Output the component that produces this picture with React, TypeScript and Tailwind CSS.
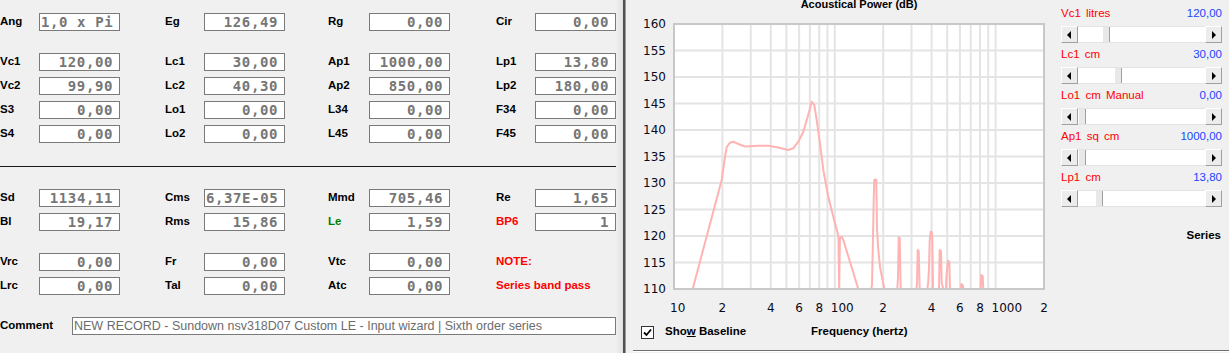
import React from "react";

const D = 370 / Math.log10(200);
const fx = (f: number) => 674 + Math.log10(f / 10) * D;
const dy = (d: number) => 24 + (160 - d) * 5.3;

type Cell = {
  label: string;
  value?: string;
  labelColor?: string;
  left?: boolean;
  noBox?: boolean;
};

const colCls = ["w-[165px]", "w-[163px]", "w-[168px]", "w-[120px]"];
const lblCls = ["w-[39px]", "w-[39px]", "w-[41px]", "w-[39px]"];

function Box({ value, left }: { value: string; left?: boolean }) {
  return (
    <div
      className={`h-[18px] w-[81px] shrink-0 border border-[#7a7a7a] bg-white flex items-center ${
        left ? "justify-start pl-[1px]" : "justify-end pr-[6px]"
      } font-['DejaVu_Sans_Mono',monospace] font-bold text-[14px] tracking-[0.6px] text-[#767676] leading-none whitespace-pre`}
    >
      {value}
    </div>
  );
}

function Row({ cells, className = "" }: { cells: Cell[]; className?: string }) {
  return (
    <div className={`flex items-center h-[18px] ${className}`}>
      {cells.map((c, i) => (
        <div key={i} className={`flex items-center ${colCls[i]} shrink-0`}>
          {c.noBox ? (
            <span className={`text-[11.5px] font-bold whitespace-nowrap ${c.labelColor ?? "text-black"}`}>{c.label}</span>
          ) : (
            <>
              <span className={`${lblCls[i]} shrink-0 text-[11.5px] font-bold ${c.labelColor ?? "text-black"}`}>{c.label}</span>
              <Box value={c.value ?? ""} left={c.left} />
            </>
          )}
        </div>
      ))}
    </div>
  );
}

function Arrow({ dir }: { dir: "l" | "r" }) {
  return (
    <div className="w-[17px] h-[17px] shrink-0 bg-[#ececec] border-t border-l border-white border-b border-r border-b-[#a0a0a0] border-r-[#a0a0a0] flex items-center justify-center">
      <svg width="5" height="8" viewBox="0 0 5 8">
        {dir === "l" ? <polygon points="4,0 4,8 0,4" fill="#000" /> : <polygon points="1,0 1,8 5,4" fill="#000" />}
      </svg>
    </div>
  );
}

function Slider({ label, value, thumb }: { label: string; value: string; thumb: string }) {
  return (
    <div className="flex flex-col">
      <div className="h-[16px] flex items-center justify-between text-[11.5px]">
        <span className="text-[#ff0000] whitespace-pre [word-spacing:2px]">{label}</span>
        <span className="text-[#1746ff]">{value}</span>
      </div>
      <div className="mt-[4px] h-[17px] flex">
        <Arrow dir="l" />
        <div className="flex-1 bg-white border-y border-[#e4e4e4] flex">
          <div className={`${thumb} w-[8px] h-full bg-[#e8e8e8] border-l border-white border-r border-r-[#a0a0a0]`} />
        </div>
        <Arrow dir="r" />
      </div>
    </div>
  );
}

const mainCurve: [number, number][] = [
  [692.7, 289], [721.7, 180], [725, 157], [726.7, 147], [730, 142.7], [733.3, 141.7], [738.3, 144],
  [745, 146.5], [758.3, 145.7], [768.3, 145.7], [778.3, 147.5], [788.3, 150], [793.3, 148.3],
  [798.3, 141.7], [803.3, 131.7], [807.7, 116.7], [811.7, 101.7], [814.3, 105], [816.7, 120],
  [820, 143.3], [823.3, 170], [828.3, 196.7], [833.3, 216.7], [837.7, 233.3], [838.4, 236],
  [839.2, 289], [839.9, 238.3], [841.7, 236.7], [843.3, 240], [858.3, 289],
];

const spikes: [number, number][][] = [
  [[871, 289], [872, 285], [872.7, 251.7], [873.7, 200], [874.3, 180], [875.7, 179.3], [876.3, 180], [877, 228.3], [878.3, 250], [880, 266.7], [884.3, 289]],
  [[897.3, 289], [898, 277.3], [898.7, 237.3], [899.7, 238.3], [900.7, 289]],
  [[916.3, 289], [917, 284], [917.7, 250], [918.7, 251], [919.7, 289]],
  [[927.3, 289], [928.3, 281.7], [929, 268.3], [929.7, 240], [930.7, 231.7], [931.7, 232], [932.3, 236.7], [933, 289]],
  [[939, 289], [939.7, 250], [941, 251], [941.7, 283.3], [942.3, 285], [943.3, 289]],
  [[946, 289], [946.3, 278.3], [947.3, 266.7], [948, 260.7], [949.3, 261.7], [950, 289]],
  [[961, 289], [961.3, 284], [962.7, 285], [963.3, 289]],
  [[980.7, 289], [981.3, 275], [982.7, 276], [983.3, 289]],
];

const gridF = [20, 30, 40, 50, 60, 70, 80, 90, 100, 200, 300, 400, 500, 600, 700, 800, 900, 1000];
const gridD = [115, 120, 125, 130, 135, 140, 145, 150, 155];
const yTicks = [160, 155, 150, 145, 140, 135, 130, 125, 120, 115, 110];
const xTicks: { f: number; t: string; start?: boolean }[] = [
  { f: 10, t: "10", start: true },
  { f: 20, t: "2" },
  { f: 40, t: "4" },
  { f: 60, t: "6" },
  { f: 80, t: "8" },
  { f: 100, t: "100", start: true },
  { f: 200, t: "2" },
  { f: 400, t: "4" },
  { f: 600, t: "6" },
  { f: 800, t: "8" },
  { f: 1000, t: "1000", start: true },
  { f: 2000, t: "2" },
];

const pts = (p: [number, number][]) => p.map(([x, y]) => `${x},${y}`).join(" ");

function Chart() {
  return (
    <div className="w-[435px] shrink-0 flex flex-col">
      <div className="flex mt-[-2px] h-[13px] leading-[13px]">
        <div className="w-[47px] shrink-0" />
        <div className="w-[372px] text-center text-[11px] font-bold text-black">Acoustical Power (dB)</div>
      </div>
      <div className="flex items-start mt-[12px]">
        <div className="w-[47px] shrink-0 h-[279px] mt-[-6px] flex flex-col justify-between items-end pr-[7px] font-['DejaVu_Sans',sans-serif] text-[12px] text-[#0a0a1a]">
          {yTicks.map((t) => (
            <span key={t} className="h-[14px] leading-[14px]">{t}</span>
          ))}
        </div>
        <div className="w-[372px] h-[267px] shrink-0">
          <svg width="372" height="267" viewBox="673 23 372 267">
            <rect x="674" y="24" width="370" height="265" fill="#fff" />
            {gridF.map((f) => (
              <line key={f} x1={fx(f)} x2={fx(f)} y1={24} y2={289} stroke="#e4e4e4" strokeWidth="2" />
            ))}
            {gridD.map((d) => (
              <line key={d} x1={674} x2={1044} y1={dy(d)} y2={dy(d)} stroke="#e4e4e4" strokeWidth="2" />
            ))}
            <polyline points={pts(mainCurve)} fill="none" stroke="#ffb3b3" strokeWidth="2" strokeLinejoin="round" />
            {spikes.map((s, i) => (
              <polyline key={i} points={pts(s)} fill="none" stroke="#ffb3b3" strokeWidth="2" strokeLinejoin="round" />
            ))}
            <rect x="674" y="24" width="370" height="265" fill="none" stroke="#c8c8c8" strokeWidth="2" />
          </svg>
        </div>
      </div>
      <div className="relative h-[14px] mt-[5px] font-['DejaVu_Sans',sans-serif] text-[12px] leading-[14px] text-[#0a0a1a]">
        {xTicks.map((x, i) => (
          <span
            key={i}
            className={`absolute top-0 ${x.start ? "-translate-x-[4px]" : "-translate-x-1/2"}`}
            style={{ left: `${fx(x.f) - 626}px` }}
          >
            {x.t}
          </span>
        ))}
      </div>
      <div className="flex items-center h-[14px] mt-[10px] pl-[15px] text-[11.5px] font-bold text-black">
        <div className="w-[13px] h-[13px] shrink-0 border border-[#333] bg-white flex items-center justify-center">
          <svg width="9" height="9" viewBox="0 0 9 9">
            <polyline points="1,4.5 3.5,7 8,1.5" fill="none" stroke="#000" strokeWidth="1.8" />
          </svg>
        </div>
        <span className="ml-[11px] w-[146px] shrink-0">
          Sho<span className="underline">w</span> Baseline
        </span>
        <span>Frequency (hertz)</span>
      </div>
    </div>
  );
}

export default function App() {
  return (
    <div className="w-[1229px] h-[353px] bg-[#f0f0f0] flex overflow-hidden font-['Liberation_Sans',Arial,sans-serif]">
      <div className="w-[616px] shrink-0 flex flex-col pt-[13px]">
        <Row
          cells={[
            { label: "Ang", value: "1,0 x Pi", left: true },
            { label: "Eg", value: "126,49" },
            { label: "Rg", value: "0,00" },
            { label: "Cir", value: "0,00" },
          ]}
        />
        <div className="flex flex-col gap-[6px] mt-[22px]">
          <Row cells={[{ label: "Vc1", value: "120,00" }, { label: "Lc1", value: "30,00" }, { label: "Ap1", value: "1000,00" }, { label: "Lp1", value: "13,80" }]} />
          <Row cells={[{ label: "Vc2", value: "99,90" }, { label: "Lc2", value: "40,30" }, { label: "Ap2", value: "850,00" }, { label: "Lp2", value: "180,00" }]} />
          <Row cells={[{ label: "S3", value: "0,00" }, { label: "Lo1", value: "0,00" }, { label: "L34", value: "0,00" }, { label: "F34", value: "0,00" }]} />
          <Row cells={[{ label: "S4", value: "0,00" }, { label: "Lo2", value: "0,00" }, { label: "L45", value: "0,00" }, { label: "F45", value: "0,00" }]} />
        </div>
        <div className="mt-[23px] h-[1px] bg-[#1a1a1a] w-[616px]" />
        <div className="flex flex-col gap-[6px] mt-[22px]">
          <Row cells={[{ label: "Sd", value: "1134,11" }, { label: "Cms", value: "6,37E-05", left: true }, { label: "Mmd", value: "705,46" }, { label: "Re", value: "1,65" }]} />
          <Row cells={[{ label: "Bl", value: "19,17" }, { label: "Rms", value: "15,86" }, { label: "Le", value: "1,59", labelColor: "text-[#008000]" }, { label: "BP6", value: "1", labelColor: "text-[#ff0000]" }]} />
        </div>
        <div className="flex flex-col gap-[6px] mt-[22px]">
          <Row cells={[{ label: "Vrc", value: "0,00" }, { label: "Fr", value: "0,00" }, { label: "Vtc", value: "0,00" }, { label: "NOTE:", noBox: true, labelColor: "text-[#ff0000]" }]} />
          <Row cells={[{ label: "Lrc", value: "0,00" }, { label: "Tal", value: "0,00" }, { label: "Atc", value: "0,00" }, { label: "Series band pass", noBox: true, labelColor: "text-[#ff0000]" }]} />
        </div>
        <div className="flex items-center h-[18px] mt-[22px]">
          <span className="w-[72px] shrink-0 text-[11.5px] font-bold text-black">Comment</span>
          <div className="flex-1 h-[18px] border border-[#7a7a7a] bg-white flex items-center pl-[1px] text-[12.5px] text-[#6c6c6c] whitespace-nowrap overflow-hidden">
            NEW RECORD - Sundown nsv318D07 Custom LE - Input wizard | Sixth order series
          </div>
        </div>
      </div>
      <div className="w-[7px] shrink-0 bg-linear-to-r from-[#f0f0f0] to-[#e0e0e0]" />
      <div className="w-[2px] shrink-0 bg-[#4f4f4f]" />
      <div className="w-[1px] shrink-0 bg-[#9a9a9a]" />
      <div className="flex-1 flex flex-col">
        <div className="flex h-[350px]">
          <Chart />
          <div className="w-[161px] shrink-0 flex flex-col pt-[6px] gap-[4px]">
            <Slider label="Vc1 litres" value="120,00" thumb="ml-[24px]" />
            <Slider label="Lc1 cm" value="30,00" thumb="ml-[36px]" />
            <Slider label="Lo1 cm Manual" value="0,00" thumb="ml-[0px]" />
            <Slider label="Ap1 sq cm" value="1000,00" thumb="ml-[0px]" />
            <Slider label="Lp1 cm" value="13,80" thumb="ml-[17px]" />
            <div className="mt-[17px] h-[14px] leading-[14px] text-right pr-[1px] text-[11.5px] font-bold text-black">Series</div>
          </div>
        </div>
        <div className="ml-[7px] h-[1px] bg-[#6e6e6e]" />
        <div className="ml-[7px] h-[1px] bg-white" />
      </div>
    </div>
  );
}
